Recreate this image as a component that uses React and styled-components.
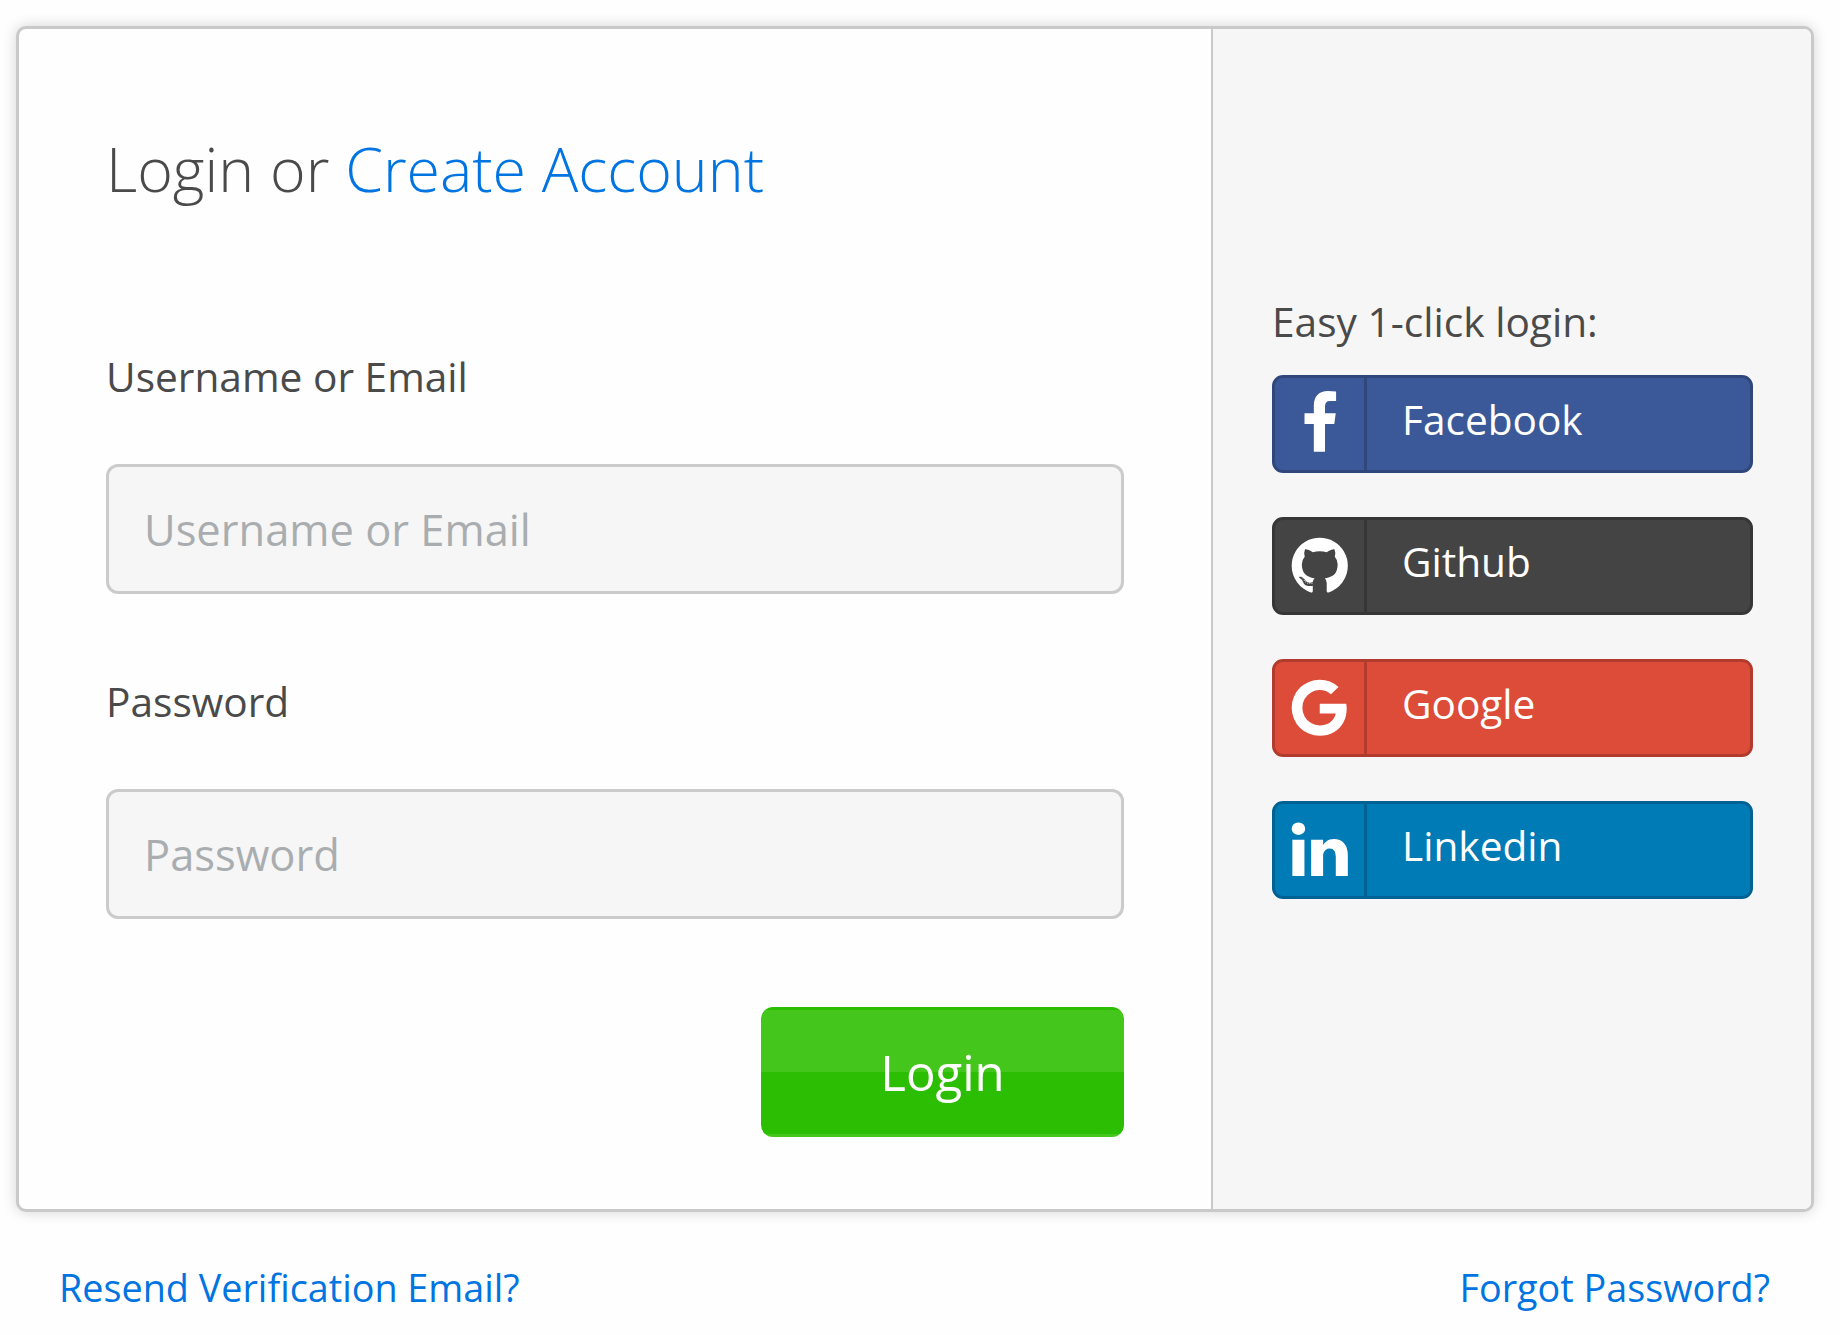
import React from "react";
import styled, { createGlobalStyle } from "styled-components";

const GlobalStyle = createGlobalStyle`
  *, *::before, *::after { box-sizing: border-box; }
  body {
    margin: 0;
    background: #fefefe;
    color: #4a4a4a;
    font-family: "Open Sans", sans-serif;
    font-size: 40.65px;
    overflow: hidden;
  }
`;

const Page = styled.main`
  width: 1840px;
  height: 1335px;
  padding: 26px 26px 0 16px;
`;

const Card = styled.section`
  display: flex;
  height: 1186px;
  border: 3px solid #c9c9c9;
  border-radius: 10px;
  background: #fefefe;
  box-shadow: 0 0 14px rgba(0, 0, 0, 0.17);
  overflow: hidden;
`;

const LoginForm = styled.form`
  flex: 1;
  display: flex;
  flex-direction: column;
  padding: 98px 87px 0;
`;

const Title = styled.h1`
  margin: 0 0 138px;
  font-size: 60.85px;
  line-height: 84px;
  font-weight: 300;
`;

const Link = styled.a`
  color: #0074e1;
  text-decoration: none;
`;

const Label = styled.label`
  line-height: 56px;
  margin-bottom: 59px;
`;

const Input = styled.input`
  width: 1018px;
  height: 130px;
  margin-bottom: 80px;
  padding: 0 35px;
  border: 3px solid #cbcbcb;
  border-radius: 12px;
  background: #f6f6f6;
  font-family: inherit;
  font-size: 43.45px;
  outline: none;
  &::placeholder { color: #a9adb0; opacity: 1; }
`;

const SubmitButton = styled.button`
  align-self: flex-end;
  width: 363px;
  height: 130px;
  margin-top: 8px;
  padding: 0 0 2px;
  border: 0;
  border-radius: 12px;
  background: linear-gradient(#2cbe02 0 3px, #44c61c 3px 65px, #2cbe02 65px 127px, #44c61c 127px);
  color: #fff;
  font-family: inherit;
  font-size: 49.2px;
`;

const SocialPanel = styled.aside`
  width: 600px;
  border-left: 2px solid #c9c9c9;
  background: #f6f6f6;
  padding: 265px 58px 0 59px;
`;

const SocialTitle = styled.p`
  margin: 0;
  line-height: 56px;
  padding-bottom: 25px;
`;

const SocialList = styled.div`
  display: flex;
  flex-direction: column;
  gap: 44px;
`;

const SocialButton = styled.button`
  display: flex;
  height: 98px;
  width: 481px;
  padding: 0;
  border: 3px solid ${(p) => p.$edge};
  border-radius: 11px;
  background: ${(p) => p.$fill};
  color: #fff;
  font-family: inherit;
  font-size: 40.6px;
  text-align: left;
`;

const IconCell = styled.span`
  display: flex;
  align-items: center;
  justify-content: center;
  width: 92px;
  height: 100%;
  padding-left: 1px;
  border-right: 3px solid ${(p) => p.$edge};
`;

const Icon = styled.svg`
  width: 65.5px;
  height: 65.5px;
  fill: #fff;
`;

const SocialName = styled.span`
  padding-left: 35px;
  line-height: 84px;
`;

const Footer = styled.footer`
  display: flex;
  justify-content: space-between;
  padding: 49px 44px 0 43px;
  font-size: 37.75px;
  line-height: 54px;
`;

const providers = [
  {
    name: "Facebook",
    fill: "#3b5998",
    edge: "#2f477a",
    path: "M1343 12v264h-157q-86 0-116 36t-30 108v189h293l-39 296h-254v759h-306v-759h-255v-296h255v-218q0-186 104-288.5t277-102.5q147 0 228 12z",
  },
  {
    name: "Github",
    fill: "#444444",
    edge: "#363636",
    path: "M896 128q209 0 385.5 103t279.5 279.5 103 385.5q0 251-146.5 451.5t-378.5 277.5q-27 5-40-7t-13-30q0-3 .5-76.5t.5-134.5q0-97-52-142 57-6 102.5-18t94-39 81-66.5 53-105 20.5-150.5q0-119-79-206 37-91-8-204-28-9-81 11t-92 44l-38 24q-93-26-192-26t-192 26q-16-11-42.5-27t-83.5-38.5-85-13.5q-45 113-8 204-79 87-79 206 0 85 20.5 150t52.5 105 80.5 67 94 39 102.5 18q-39 36-49 103-21 10-45 15t-57 5-65.5-21.5-55.5-62.5q-19-32-48.5-52t-49.5-24l-20-3q-21 0-29 4.5t-5 11.5 9 14 13 12l7 5q22 10 43.5 38t31.5 51l10 23q13 38 44 61.5t67 30 69.5 7 55.5-3.5l23-4q0 38 .5 88.5t.5 54.5q0 18-13 30t-40 7q-232-77-378.5-277.5t-146.5-451.5q0-209 103-385.5t279.5-279.5 385.5-103zm-477 1103q3-7-7-12-10-3-13 2-3 7 7 12 9 6 13-2zm31 34q7-5-2-16-10-9-16-3-7 5 2 16 10 10 16 3zm30 45q9-7 0-19-8-13-17-6-9 5 0 18t17 7zm42 42q8-8-4-19-12-12-20-3-9 8 4 19 12 12 20 3zm57 25q3-11-13-16-15-4-19 7t13 15q15 6 19-6zm63 5q0-13-17-11-16 0-16 11 0 13 17 11 16 0 16-11zm58-10q-2-11-18-9-16 3-14 15t18 8 14-14z",
  },
  {
    name: "Google",
    fill: "#dd4b39",
    edge: "#b13c2e",
    path: "M896 786h725q12 67 12 128 0 217-91 387.5t-259.5 266.5-386.5 96q-157 0-299-60.5t-245-163.5-163.5-245-60.5-299 60.5-299 163.5-245 245-163.5 299-60.5q300 0 515 201l-209 201q-123-119-306-119-129 0-238.5 65t-173.5 176.5-64 243.5 64 243.5 173.5 176.5 238.5 65q87 0 160-24t120-60 82-82 51.5-87 22.5-78h-436v-264z",
  },
  {
    name: "Linkedin",
    fill: "#007bb6",
    edge: "#006292",
    path: "M477 625v991h-330v-991h330zm21-306q1 73-50.5 122t-135.5 49h-2q-82 0-132-49t-50-122q0-74 51.5-122.5t134.5-48.5 133 48.5 51 122.5zm1166 729v568h-329v-530q0-105-40.5-164.5t-126.5-59.5q-63 0-105.5 34.5t-63.5 85.5q-11 30-11 81v553h-329q2-399 2-647t-1-296l-1-48h329v144h-2q20-32 41-56t56.5-52 87-43.5 114.5-15.5q171 0 275 113.5t104 332.5z",
  },
];

export default function App() {
  return (
    <Page>
      <GlobalStyle />
      <Card>
        <LoginForm onSubmit={(e) => e.preventDefault()}>
          <Title>
            Login or <Link>Create Account</Link>
          </Title>
          <Label htmlFor="username">Username or Email</Label>
          <Input id="username" placeholder="Username or Email" />
          <Label htmlFor="password">Password</Label>
          <Input id="password" type="password" placeholder="Password" />
          <SubmitButton>Login</SubmitButton>
        </LoginForm>
        <SocialPanel>
          <SocialTitle>Easy 1-click login:</SocialTitle>
          <SocialList>
            {providers.map((p) => (
              <SocialButton key={p.name} type="button" $fill={p.fill} $edge={p.edge}>
                <IconCell $edge={p.edge}>
                  <Icon viewBox="0 0 1792 1792">
                    <path d={p.path} />
                  </Icon>
                </IconCell>
                <SocialName>{p.name}</SocialName>
              </SocialButton>
            ))}
          </SocialList>
        </SocialPanel>
      </Card>
      <Footer>
        <Link>Resend Verification Email?</Link>
        <Link>Forgot Password?</Link>
      </Footer>
    </Page>
  );
}
